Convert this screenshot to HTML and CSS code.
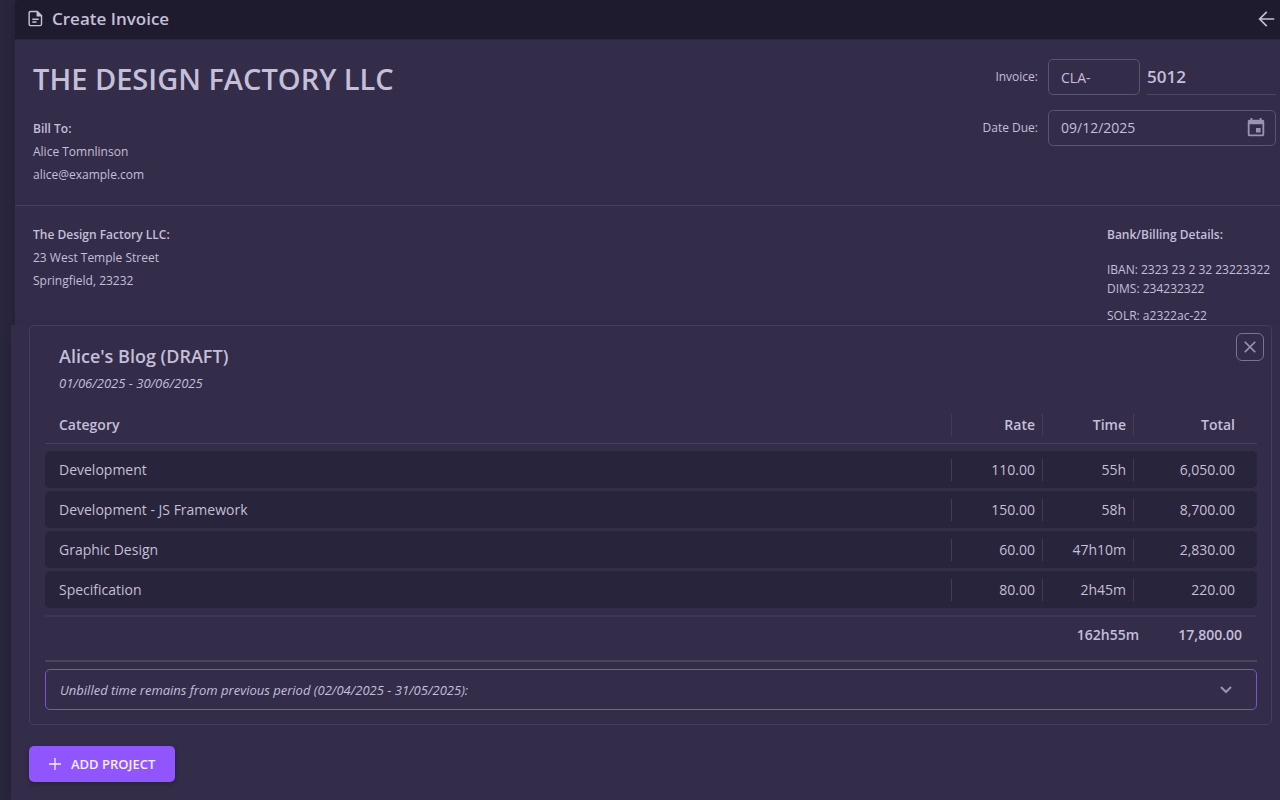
FILE: index.html
```html
<!DOCTYPE html>
<html lang="en">
<head>
  <meta charset="UTF-8" />
  <meta name="viewport" content="width=device-width, initial-scale=1.0"/>
  <title>Create Invoice</title>
  <link rel="stylesheet" href="styles.css">
</head>
<body>
  <div class="sheet">
    <header class="topbar">
      <svg class="doc-icon" viewBox="0 0 24 24" fill="none" stroke="currentColor" stroke-width="2">
        <path d="M5 2h9.500l6 6v12a2 2 0 0 1-2 2H5a2 2 0 0 1-2-2V4a2 2 0 0 1 2-2z" />
        <path d="M13.500 1v8h8z" fill="currentColor" stroke="none" />
        <path d="M7.500 13h9M7.500 17h6" />
      </svg>
      <h1>Create Invoice</h1>
      <button class="back" aria-label="Back">
        <svg viewBox="0 0 24 24" fill="none" stroke="currentColor" stroke-width="2.200"><path d="M23 12H4M13 2.500L3.500 12l9.500 9.500" /></svg>
      </button>
    </header>

    <section class="intro">
      <div>
        <h2>THE DESIGN FACTORY LLC</h2>
        <div class="address">
          <strong>Bill To:</strong>
          <span>Alice Tomnlinson</span>
          <span>alice@example.com</span>
        </div>
      </div>
      <form class="details">
        <label for="prefix">Invoice:</label>
        <div class="number-row">
          <input type="text" id="prefix" class="box prefix" value="CLA-" />
          <input type="text" class="number" aria-label="Invoice number" value="5012" />
        </div>
        <label for="due">Date Due:</label>
        <div class="box date-row">
          <input type="text" id="due" value="09/12/2025" />
          <button type="button" class="calendar" aria-label="Choose date">
            <svg viewBox="0 0 24 24" fill="currentColor"><path d="M17 12h-5v5h5v-5zM16 1v2H8V1H6v2H5c-1.100 0-2 .9-2 2v14c0 1.100.9 2 2 2h14c1.100 0 2-.9 2-2V5c0-1.100-.9-2-2-2h-1V1h-2zm3 18H5V8h14v11z" /></svg>
          </button>
        </div>
      </form>
    </section>

    <section class="billing">
      <div class="address">
        <strong>The Design Factory LLC:</strong>
        <span>23 West Temple Street</span>
        <span>Springfield, 23232</span>
      </div>
      <div class="address bank">
        <strong>Bank/Billing Details:</strong>
        <p>IBAN: 2323 23 2 32 23223322<br>DIMS: 234232322</p>
        <p>SOLR: a2322ac-22</p>
      </div>
    </section>
  </div>

  <main class="projects">
    <article class="card">
      <div class="card-head">
        <div>
          <h3>Alice's Blog (DRAFT)</h3>
          <p class="period">01/06/2025 - 30/06/2025</p>
        </div>
        <button class="close" aria-label="Remove project">
          <svg viewBox="0 0 16 16" fill="none" stroke="currentColor" stroke-width="2"><path d="M2 2l12 12M14 2L2 14" /></svg>
        </button>
      </div>

      <table>
        <thead>
          <tr><th>Category</th><th>Rate</th><th>Time</th><th>Total</th></tr>
        </thead>
        <tbody>
          <tr><td>Development</td><td>110.00</td><td>55h</td><td>6,050.00</td></tr>
          <tr><td>Development - JS Framework</td><td>150.00</td><td>58h</td><td>8,700.00</td></tr>
          <tr><td>Graphic Design</td><td>60.00</td><td>47h10m</td><td>2,830.00</td></tr>
          <tr><td>Specification</td><td>80.00</td><td>2h45m</td><td>220.00</td></tr>
        </tbody>
        <tfoot>
          <tr><td></td><td>162h55m</td><td>17,800.00</td></tr>
        </tfoot>
      </table>

      <button class="unbilled">
        <span>Unbilled time remains from previous period (02/04/2025 - 31/05/2025):</span>
        <svg viewBox="0 0 12 12" fill="none" stroke="currentColor" stroke-width="2"><path d="M1 3l5 5 5-5" /></svg>
      </button>
    </article>

    <button class="add">
      <svg viewBox="0 0 12 12" fill="none" stroke="currentColor" stroke-width="1.300"><path d="M6 0v12M0 6h12" /></svg>
      <span>ADD PROJECT</span>
    </button>
  </main>
</body>
</html>
```
FILE: styles.css
```css
* {
  box-sizing: border-box;
}

html, body {
  margin: 0;
  padding: 0;
  height: 100%;
}

body {
  display: flex;
  flex-direction: column;
  background: #2a263e;
  color: #c5bfd8;
  font-family: 'Segoe UI', 'Open Sans', sans-serif;
  font-size: 14px;
  line-height: 20px;
  overflow: hidden;
}

h1, h2, h3, p {
  margin: 0;
  font-weight: 600;
}

button, input {
  font: inherit;
  color: inherit;
  background: none;
  border: none;
  padding: 0;
}

button {
  cursor: pointer;
}

svg {
  display: block;
  flex: none;
}

.sheet {
  margin-left: 15px;
  background: #332d4a;
  border-top-left-radius: 4px;
  box-shadow: 0 0 12px rgba(0, 0, 0, 0.2);
}

.topbar {
  display: flex;
  align-items: center;
  height: 40px;
  padding: 0 5px 2px 12px;
  background: #1e1b2e;
  border-bottom: 1px solid #2b273f;
  border-top-left-radius: 4px;
}

.doc-icon {
  width: 17px;
  height: 17px;
}

.topbar h1 {
  margin-left: 8px;
  font-size: 17px;
}

.back {
  margin-left: auto;
}

.back svg {
  width: 18px;
  height: 18px;
}

.intro {
  display: flex;
  justify-content: space-between;
  height: 166px;
  padding: 19px 4px 0 18px;
  border-bottom: 1px solid #464059;
}

.intro h2 {
  margin-bottom: 18px;
  font-size: 29px;
  line-height: 40px;
}

.address {
  display: flex;
  flex-direction: column;
  font-size: 12px;
  line-height: 23px;
}

.address p {
  font-weight: 400;
  line-height: 19px;
}

.address strong {
  font-weight: 600;
}

.address strong + p {
  margin: 14px 0 8px;
}

.bank {
  min-width: 169px;
}

.details {
  display: grid;
  grid-template-columns: auto 228px;
  grid-auto-rows: 36px;
  gap: 15px 10px;
  align-items: center;
}

.details label {
  font-size: 12px;
  text-align: right;
}

.number-row {
  display: flex;
  gap: 7px;
}

.box {
  height: 36px;
  padding: 0 12px;
  border: 1px solid #5a5470;
  border-radius: 5px;
}

.prefix {
  width: 92px;
}

.number {
  flex: 1;
  min-width: 0;
  border-bottom: 1px solid #4d4663;
  font-size: 17px;
  font-weight: 600;
}

.date-row {
  display: flex;
  align-items: center;
  padding-right: 8px;
}

.date-row input {
  flex: 1;
  min-width: 0;
}

.calendar svg {
  width: 22px;
  height: 22px;
  color: #9a94b0;
}

.billing {
  display: flex;
  justify-content: space-between;
  height: 119px;
  padding: 17px 4px 0 18px;
}

.projects {
  flex: 1;
  margin-left: 11px;
  padding: 0 8px 18px 18px;
  background: #332d4a;
  box-shadow: 0 6px 12px rgba(0, 0, 0, 0.2);
}

.card {
  padding: 7px 14px 14px 15px;
  border: 1px solid #453f5a;
  border-radius: 5px;
}

.card-head {
  display: flex;
  justify-content: space-between;
  align-items: flex-start;
  margin-right: -7px;
  padding-left: 14px;
}

.card-head h3 {
  margin-top: 11px;
  font-size: 18px;
  line-height: 24px;
}

.period {
  margin-top: 5px;
  font-size: 13px;
  font-style: italic;
  font-weight: 400;
}

.close {
  display: grid;
  place-items: center;
  width: 28px;
  height: 28px;
  border: 1px solid #7a748f;
  border-radius: 6px;
  color: #9a94b0;
}

.close svg {
  width: 14px;
  height: 14px;
}

table, thead, tbody, tfoot {
  display: block;
}

table {
  margin-top: 14px;
}

tr {
  display: grid;
  grid-template-columns: 1fr 91px 91px 123px;
  align-items: center;
}

th, td {
  padding: 0 8px;
  font-weight: 400;
  line-height: 22px;
  text-align: right;
}

th {
  font-weight: 600;
}

th:first-child, td:first-child {
  padding-left: 14px;
  text-align: left;
}

th:last-child, td:last-child {
  padding-right: 22px;
}

thead th:not(:last-child), tbody td:not(:last-child) {
  padding-right: 7px;
  border-right: 1px solid #423c57;
}

thead tr {
  height: 37px;
  border-bottom: 1px solid #48425d;
}

tbody {
  display: grid;
  gap: 3px;
  padding: 7px 0;
}

tbody tr {
  height: 37px;
  background: #28243b;
  border-radius: 5px;
}

tfoot tr {
  grid-template-columns: 1fr 103px 118px;
  height: 47px;
  padding-bottom: 7px;
  border-top: 2px solid #3d3753;
  border-bottom: 2px solid #4a4460;
}

tfoot td {
  font-weight: 600;
}

tfoot td:last-child {
  padding-right: 15px;
}

tfoot td:nth-child(2) {
  padding-right: 0;
}

.unbilled {
  display: flex;
  justify-content: space-between;
  align-items: center;
  width: 100%;
  height: 41px;
  margin-top: 7px;
  padding: 0 24px 0 14px;
  border: 1px solid #7e4fdb;
  border-radius: 5px;
  font-size: 13px;
  font-style: italic;
}

.unbilled svg {
  width: 12px;
  height: 12px;
  color: #9a94b0;
}

.add {
  display: flex;
  align-items: center;
  gap: 10px;
  height: 36px;
  margin-top: 21px;
  padding: 0 20px;
  background: #9155fd;
  border-radius: 5px;
  box-shadow: 0 2px 5px rgba(20, 17, 33, 0.4);
  color: #f4efff;
  font-size: 13px;
  font-weight: 600;
}

.add svg {
  width: 12px;
  height: 12px;
}
```
